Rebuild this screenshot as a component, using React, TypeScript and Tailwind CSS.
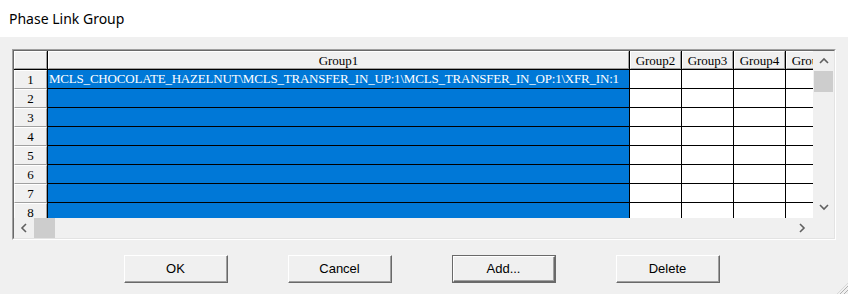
import React from "react";

const serif = { fontFamily: '"Liberation Serif", "Times New Roman", serif' };

function Chevron({ dir }: { dir: "up" | "down" | "left" | "right" }) {
  const pts: Record<string, string> = {
    up: "1,6 5,2 9,6",
    down: "1,2 5,6 9,2",
    left: "6,1 2,5 6,9",
    right: "2,1 6,5 2,9",
  };
  const vertical = dir === "up" || dir === "down";
  return (
    <svg width={vertical ? 10 : 8} height={vertical ? 8 : 10} viewBox={vertical ? "0 0 10 8" : "0 0 8 10"}>
      <polyline points={pts[dir]} fill="none" stroke="#606060" strokeWidth="1.6" />
    </svg>
  );
}

function HeadCell({ w, children }: { w: string; children?: React.ReactNode }) {
  return (
    <div className={`${w} h-[19px] shrink-0 border-r border-b border-black`}>
      <div className="h-full w-full bg-[#f0f0f0] border-t border-l border-white border-b border-r border-b-[#a0a0a0] border-r-[#a0a0a0] flex items-center justify-center text-[13px] leading-none text-black overflow-hidden whitespace-nowrap">
        {children}
      </div>
    </div>
  );
}

function Btn({ label, def }: { label: string; def?: boolean }) {
  return (
    <div className={`w-[104px] h-[28px] ${def ? "border border-[#6a6a6a]" : ""}`}>
      <div className="h-full w-full border-t border-l border-white border-b border-r border-b-[#696969] border-r-[#696969]">
        <div className="h-full w-full border-b border-r border-b-[#a0a0a0] border-r-[#a0a0a0] bg-[#f0f0f0] flex items-center justify-center text-[13px] text-black" style={{ fontFamily: '"Liberation Sans", Arial, sans-serif' }}>
          {label}
        </div>
      </div>
    </div>
  );
}

export default function App() {
  const rows = [1, 2, 3, 4, 5, 6, 7, 8];
  return (
    <div className="w-[848px] h-[294px] bg-[#f0f0f0] relative overflow-hidden">
      <div className="h-[37px] bg-white flex items-center pl-[9px] text-[14px] text-black" style={{ fontFamily: '"Noto Sans", "Open Sans", sans-serif' }}>
        Phase Link Group
      </div>
      <div className="pl-[12px] pt-[12px]">
        <div className="w-[824px] h-[191px] border-t border-l border-[#a0a0a0] border-b border-r border-b-white border-r-white">
          <div className="w-full h-full border-t border-l border-[#696969] border-b border-r border-b-[#e3e3e3] border-r-[#e3e3e3] flex flex-col">
            <div className="flex h-[167px]">
              <div className="w-[799px] h-[167px] overflow-hidden bg-[#f0f0f0]" style={serif}>
                <div className="flex w-max">
                  <HeadCell w="w-[34px]" />
                  <HeadCell w="w-[582px]">Group1</HeadCell>
                  <HeadCell w="w-[52px]">Group2</HeadCell>
                  <HeadCell w="w-[52px]">Group3</HeadCell>
                  <HeadCell w="w-[52px]">Group4</HeadCell>
                  <HeadCell w="w-[52px]">Group5</HeadCell>
                </div>
                {rows.map((r) => (
                  <div key={r} className="flex w-max">
                    <div className="w-[34px] h-[19px] shrink-0 border-r border-black">
                      <div className="h-full w-full bg-[#f0f0f0] border-t border-l border-white border-b border-r border-b-[#a0a0a0] border-r-[#a0a0a0] flex items-center justify-center text-[13px] leading-none text-black">
                        {r}
                      </div>
                    </div>
                    <div className="w-[582px] h-[19px] shrink-0 border-r border-b border-black bg-[#0078d7] text-white text-[13px] tracking-[-0.2px] leading-[18px] pl-[1px] whitespace-nowrap overflow-hidden">
                      {r === 1 ? "MCLS_CHOCOLATE_HAZELNUT\\MCLS_TRANSFER_IN_UP:1\\MCLS_TRANSFER_IN_OP:1\\XFR_IN:1" : ""}
                    </div>
                    <div className="w-[52px] h-[19px] shrink-0 border-r border-b border-black bg-white" />
                    <div className="w-[52px] h-[19px] shrink-0 border-r border-b border-black bg-white" />
                    <div className="w-[52px] h-[19px] shrink-0 border-r border-b border-black bg-white" />
                    <div className="w-[52px] h-[19px] shrink-0 border-r border-b border-black bg-white" />
                  </div>
                ))}
              </div>
              <div className="w-[21px] h-[167px] flex flex-col bg-[#f0f0f0]">
                <div className="h-[20px] flex items-center justify-center">
                  <Chevron dir="up" />
                </div>
                <div className="h-[21px] mx-[1px] bg-[#cdcdcd]" />
                <div className="flex-1" />
                <div className="h-[22px] flex items-center justify-center">
                  <Chevron dir="down" />
                </div>
              </div>
            </div>
            <div className="flex h-[20px]">
              <div className="w-[799px] h-[20px] flex bg-[#f0f0f0]">
                <div className="w-[20px] flex items-center justify-center">
                  <Chevron dir="left" />
                </div>
                <div className="w-[21px] h-full bg-[#cdcdcd]" />
                <div className="flex-1" />
                <div className="w-[22px] flex items-center justify-center">
                  <Chevron dir="right" />
                </div>
              </div>
              <div className="w-[21px] h-[20px] bg-[#f0f0f0]" />
            </div>
          </div>
        </div>
      </div>
      <div className="flex gap-[60px] pl-[124px] mt-[15px]">
        <Btn label="OK" />
        <Btn label="Cancel" />
        <Btn label="Add..." def />
        <Btn label="Delete" />
      </div>
      <svg className="absolute right-0 bottom-0" width="11" height="11" viewBox="0 0 11 11">
        <line x1="11" y1="3" x2="3" y2="11" stroke="#b0b0b0" strokeWidth="1" />
        <line x1="11" y1="7" x2="7" y2="11" stroke="#b0b0b0" strokeWidth="1" />
        <line x1="11" y1="0" x2="0" y2="11" stroke="#d8d8d8" strokeWidth="1" />
      </svg>
    </div>
  );
}
